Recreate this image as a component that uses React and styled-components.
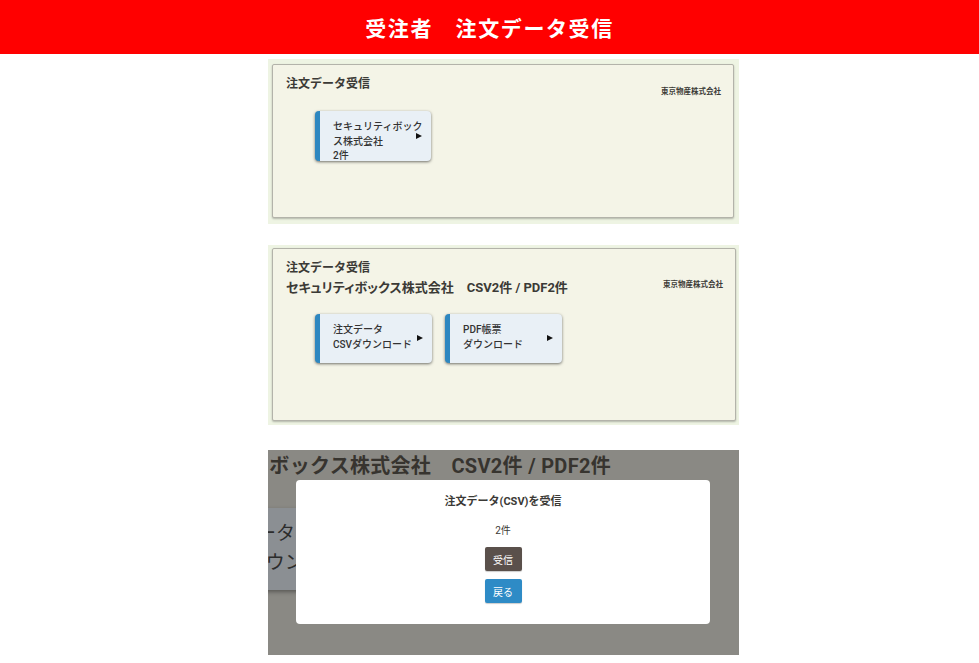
import styled, { createGlobalStyle } from 'styled-components'

const GlobalStyle = createGlobalStyle`
  body {
    margin: 0;
    background: #ffffff;
    font-family: Roboto, "Noto Sans CJK JP", sans-serif;
    color: #3a3a3a;
  }
`

const Header = styled.header`
  height: 54px;
  background: #ff0000;
  color: #ffffff;
  font-size: 21px;
  font-weight: 700;
  display: flex;
  align-items: center;
  justify-content: center;
  letter-spacing: 1.6px;
`

const Column = styled.main`
  width: 471px;
  margin: 5px 0 0 268px;
  display: flex;
  flex-direction: column;
`

const Frame = styled.section`
  background: #eef4e3;
  padding: ${p => p.$pad};
  margin-bottom: ${p => p.$gap}px;
`

const Card = styled.div`
  background: #f4f4e7;
  border: 1px solid #b3b3aa;
  border-radius: 2px;
  box-shadow: 0 1px 2px rgba(0, 0, 0, 0.25);
  height: ${p => p.$h}px;
  box-sizing: border-box;
  padding: 10px 12px 0 13px;
`

const CardHead = styled.div`
  display: flex;
  justify-content: space-between;
  align-items: center;
`

const Title = styled.div`
  font-size: 12px;
  font-weight: 700;
  line-height: 19px;
  color: #3b3a36;
`

const SubTitle = styled.div`
  font-size: 13px;
  font-weight: 700;
  line-height: 19px;
  color: #3b3a36;
  font-feature-settings: "palt";
  white-space: nowrap;
`

const Company = styled.div`
  font-size: 7.5px;
  font-weight: 700;
  line-height: 10px;
  color: #3b3a36;
  margin: 7px 0 -7px;
`

const ButtonRow = styled.div`
  display: flex;
  gap: 13px;
  margin: 17px 0 0 29px;
`

const NavButton = styled.div`
  position: relative;
  width: ${p => p.$w}px;
  height: ${p => p.$h}px;
  box-sizing: border-box;
  overflow: hidden;
  background: #e9f0f6;
  border-left: 5px solid #2d87c0;
  border-radius: 4px;
  box-shadow: 0 1px 3px rgba(0, 0, 0, 0.55);
  padding: 9px 5px 0 13px;
  font-size: 10px;
  font-weight: 500;
  line-height: 14.5px;
  color: #333333;
`

const Arrow = styled.span`
  position: absolute;
  right: 9px;
  top: 50%;
  margin-top: -3.5px;
  width: 0;
  height: 0;
  border-top: 3.5px solid transparent;
  border-bottom: 3.5px solid transparent;
  border-left: 6px solid #111111;
`

const Backdrop = styled.section`
  position: relative;
  width: 471px;
  height: 205px;
  background: #8a8984;
  overflow: hidden;
`

const BackHeading = styled.div`
  width: 343px;
  display: flex;
  justify-content: flex-end;
  padding-top: 3px;
  font-size: 20px;
  font-weight: 700;
  line-height: 26px;
  color: #37342f;
  white-space: nowrap;
  letter-spacing: 0.3px;
`

const BackButton = styled.div`
  width: 200px;
  height: 82px;
  margin: 29px 0 0 -150px;
  box-sizing: border-box;
  background: #8b8f93;
  box-shadow: 0 2px 4px rgba(0, 0, 0, 0.35);
  padding-top: 11px;
  font-size: 19px;
  line-height: 29px;
  color: #2c2c2c;
  white-space: nowrap;
  overflow: hidden;
`

const BackLine = styled.div`
  padding-left: ${p => p.$indent}px;
`

const Modal = styled.div`
  position: absolute;
  left: 28px;
  top: 30px;
  width: 414px;
  height: 144px;
  background: #ffffff;
  border-radius: 4px;
  display: flex;
  flex-direction: column;
  align-items: center;
  padding-top: 14px;
  box-sizing: border-box;
`

const ModalTitle = styled.div`
  font-size: 11px;
  font-weight: 700;
  line-height: 16px;
  color: #3b3a36;
`

const Count = styled.div`
  font-size: 10px;
  line-height: 14px;
  margin-top: 14px;
  color: #3b3a36;
`

const ActionButton = styled.button`
  width: 37px;
  height: 24px;
  margin-top: ${p => p.$mt}px;
  border: none;
  border-radius: 2px;
  background: ${p => p.$bg};
  color: #ffffff;
  font-family: inherit;
  font-size: 10px;
  padding: 0;
  box-shadow: 0 1px 1px rgba(0, 0, 0, 0.2);
`

function Panel({ frame, cardHeight, children }) {
  return (
    <Frame $pad={frame.pad} $gap={frame.gap}>
      <Card $h={cardHeight}>{children}</Card>
    </Frame>
  )
}

export default function App() {
  return (
    <>
      <GlobalStyle />
      <Header>受注者　注文データ受信</Header>
      <Column>
        <Panel frame={{ pad: '5px 5px 6px 4px', gap: 21 }} cardHeight={154}>
          <CardHead>
            <Title>注文データ受信</Title>
            <Company>東京物産株式会社</Company>
          </CardHead>
          <ButtonRow>
            <NavButton $w={116} $h={50}>
              セキュリティボックス株式会社<br />2件
              <Arrow />
            </NavButton>
          </ButtonRow>
        </Panel>

        <Panel frame={{ pad: '3px 3px 4px 4px', gap: 25 }} cardHeight={173}>
          <CardHead>
            <div>
              <Title>注文データ受信</Title>
              <SubTitle>セキュリティボックス株式会社　CSV2件 / PDF2件</SubTitle>
            </div>
            <Company>東京物産株式会社</Company>
          </CardHead>
          <ButtonRow>
            <NavButton $w={117} $h={49}>
              注文データ<br />CSVダウンロード
              <Arrow />
            </NavButton>
            <NavButton $w={117} $h={49}>
              PDF帳票<br />ダウンロード
              <Arrow />
            </NavButton>
          </ButtonRow>
        </Panel>

        <Backdrop>
          <BackHeading>セキュリティボックス株式会社　CSV2件 / PDF2件</BackHeading>
          <BackButton>
            <BackLine $indent={82}>注文データ</BackLine>
            <BackLine $indent={93}>CSVダウンロード</BackLine>
          </BackButton>
          <Modal>
            <ModalTitle>注文データ(CSV)を受信</ModalTitle>
            <Count>2件</Count>
            <ActionButton $mt={9} $bg="#5a504b">受信</ActionButton>
            <ActionButton $mt={8} $bg="#2e8bc6">戻る</ActionButton>
          </Modal>
        </Backdrop>
      </Column>
    </>
  )
}
